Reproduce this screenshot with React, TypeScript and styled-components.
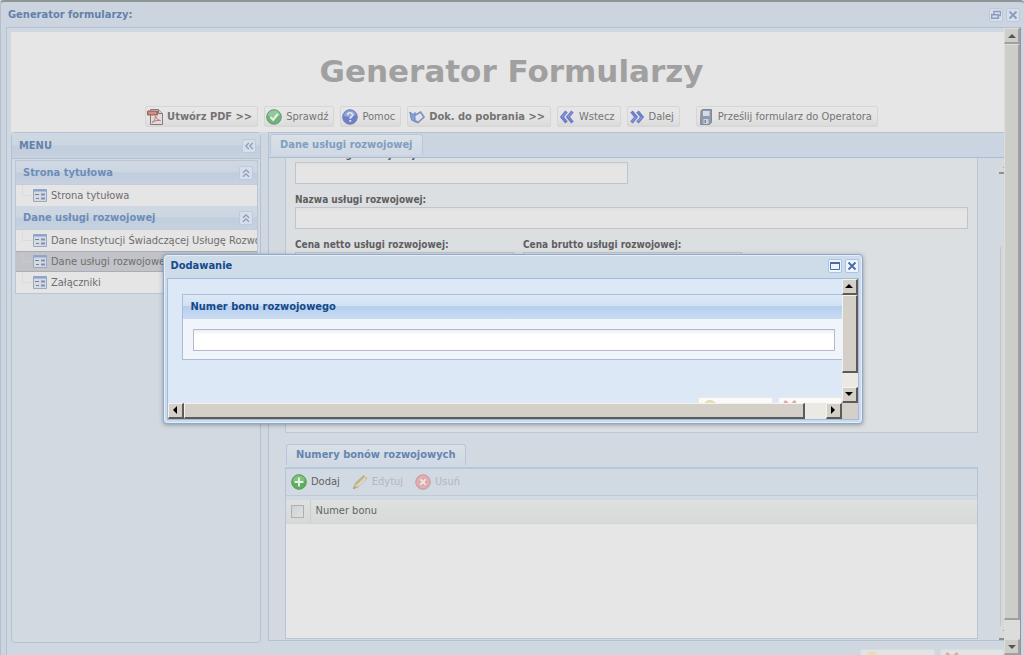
import React from 'react';
import styled, { createGlobalStyle, css } from 'styled-components';

const GlobalStyle = createGlobalStyle`
  * { box-sizing: border-box; }
  body {
    margin: 0;
    overflow: hidden;
    background: #cbd4df;
    color: #6b6b6b;
    font: 11px/14px "DejaVu Sans Condensed", "DejaVu Sans", Tahoma, sans-serif;
  }
  button, input { font: inherit; color: inherit; margin: 0; }
  button { cursor: pointer; }
`;

/* ---------- main window ---------- */

const Window = styled.main`
  display: flex;
  flex-direction: column;
  height: 100vh;
  overflow: hidden;
  border-top: 2px solid #8f9794;
  border-left: 1px solid #b4bfcd;
  border-radius: 4px 4px 0 0;
  background: #cbd4df;
`;

const TitleBar = styled.header<{ $active?: boolean }>`
  display: flex;
  align-items: center;
  gap: 3px;
  flex: none;
  height: ${p => (p.$active ? 23 : 25)}px;
  padding: ${p => (p.$active ? '0 0 0 4px' : '0 4px 0 7px')};
  color: ${p => (p.$active ? '#15498b' : '#6481aa')};
`;

const Title = styled.h2`
  flex: 1;
  margin: 0;
  font-size: 11px;
  line-height: 14px;
`;

const ToolButton = styled.button<{ $faded?: boolean }>`
  display: flex;
  align-items: center;
  justify-content: center;
  flex: none;
  width: 14px;
  height: 14px;
  padding: 0;
  border: 1px solid ${p => (p.$faded ? '#bdcadd' : '#a9c3ea')};
  border-radius: 2px;
  background: ${p => (p.$faded ? '#d6deea' : '#eef5ff')};
  color: ${p => (p.$faded ? '#8a9cba' : '#4a6ba3')};
`;

const WindowBody = styled.div`
  display: flex;
  flex: 1;
  min-height: 0;
  margin: 0 3px 0 5px;
  border: 1px solid #b3c1d4;
  border-bottom: 0;
  border-right-color: #8d95a5;
`;

const Page = styled.div`
  display: flex;
  flex-direction: column;
  flex: 1;
  min-width: 0;
  padding: 4px 0 0 4px;
  background: #cfd7e1;
`;

const Banner = styled.div`
  display: flex;
  flex-direction: column;
  align-items: center;
  justify-content: space-between;
  flex: none;
  height: 100px;
  padding: 20px 0 5px 8px;
  background: #e6e6e6;
`;

const Heading = styled.h1`
  margin: 0;
  color: #a0a0a0;
  font: bold 31px/38px "DejaVu Sans", Verdana, sans-serif;
`;

const Toolbar = styled.nav`
  display: flex;
  gap: 6px;
`;

const ActionButton = styled.button<{ $bold?: boolean; $apart?: boolean }>`
  display: flex;
  align-items: center;
  gap: 4px;
  height: 21px;
  margin-left: ${p => (p.$apart ? 10 : 0)}px;
  padding: 0 5px 0 1px;
  border: 1px solid #d6d6d6;
  border-radius: 2px;
  background: linear-gradient(#e7e7e7, #e4e4e4 60%, #dadada);
  color: #747474;
  font-weight: ${p => (p.$bold ? 'bold' : 'normal')};
  white-space: nowrap;
`;

const Columns = styled.div`
  display: flex;
  flex: 1;
  gap: 7px;
  min-height: 0;
`;

/* ---------- menu ---------- */

const MenuPanel = styled.aside`
  display: flex;
  flex-direction: column;
  flex: none;
  width: 250px;
  padding-bottom: 3px;
  border: 1px solid #b5c1d2;
  border-radius: 4px;
  background: #d2d9e1;
`;

const barFill = css`
  background: linear-gradient(#cfd8e2, #ccd6e2 48%, #c0cddd 52%, #c7d2e0);
`;

const MenuHeader = styled.div`
  ${barFill}
  display: flex;
  align-items: center;
  justify-content: space-between;
  height: 26px;
  padding: 0 4px 0 7px;
  border-bottom: 1px solid #b5c1d2;
  color: #6481aa;
  font-weight: bold;
`;

const MenuGroups = styled.div`
  margin: 1px 2px 0 3px;
  border: 1px solid #bac6d5;
`;

const GroupHeader = styled.div`
  ${barFill}
  display: flex;
  align-items: center;
  justify-content: space-between;
  height: 24px;
  padding: 0 4px 0 7px;
  border-bottom: 1px solid #c3cddb;
  color: #6d8db8;
  font-weight: bold;
`;

const GroupItems = styled.ul`
  margin: 0;
  padding: 0;
  list-style: none;
  background: #e5e5e5;
`;

const GroupItem = styled.li<{ $selected?: boolean }>`
  display: flex;
  align-items: center;
  height: 21px;
  padding-left: 6px;
  overflow: hidden;
  border: 0 solid #a9adb5;
  border-width: ${p => (p.$selected ? '1px 0' : '0')};
  background: ${p => (p.$selected ? '#c1c3c8' : 'transparent')};
`;

const Branch = styled.i`
  flex: none;
  width: 9px;
  height: 11px;
  margin: 0 2px 11px 0;
  border: 1px dotted #d2d2d2;
  border-width: 0 0 1px 1px;
`;

const ItemLink = styled.a`
  display: flex;
  align-items: center;
  gap: 4px;
  color: #6e6e6e;
  text-decoration: none;
  white-space: nowrap;
`;

/* ---------- content ---------- */

const ContentPanel = styled.section`
  display: flex;
  flex-direction: column;
  flex: 1;
  min-width: 0;
  margin-bottom: 2px;
  border: 1px solid #b5c1d2;
  border-right: 0;
  background: #d2d9e1;
`;

const TabBar = styled.div<{ $inner?: boolean }>`
  display: flex;
  align-items: flex-end;
  flex: none;
  height: ${p => (p.$inner ? 36 : 25)}px;
  padding: 0 1px 2px;
  border-bottom: ${p => (p.$inner ? '2px solid #b2c9df' : '1px solid #adbcd3')};
  background: ${p => (p.$inner ? 'transparent' : 'linear-gradient(#ccd5e0, #cad4e3)')};
`;

const Tab = styled.button<{ $soft?: boolean }>`
  height: 21px;
  padding: 0 9px;
  border: 1px solid #b7c6da;
  border-bottom: 0;
  border-radius: 3px 3px 0 0;
  background: linear-gradient(#d9e0e7, #d0d9e4);
  color: ${p => (p.$soft ? '#809fc0' : '#6685b0')};
  font-weight: bold;
  white-space: nowrap;
`;

const ContentRow = styled.div`
  display: flex;
  flex: 1;
  min-height: 0;
`;

const ContentMain = styled.div`
  display: flex;
  flex-direction: column;
  flex: 1;
  min-width: 0;
  margin: 0 21px 1px 16px;
`;

const FormView = styled.div`
  flex: none;
  height: 275px;
  overflow: hidden;
  border: 1px solid #bcc7d5;
  border-top: 0;
  background: #dcdfe1;
`;

const Form = styled.form`
  display: flex;
  flex-direction: column;
  gap: 7px;
  margin-top: -12px;
  padding: 0 9px;
`;

const FieldRow = styled.div`
  display: flex;
  gap: 9px;
`;

const Field = styled.label<{ $width?: string }>`
  display: flex;
  flex-direction: column;
  width: ${p => p.$width || '100%'};
  padding-top: 2px;
  color: #5e5e5e;
  font-size: 10px;
  font-weight: bold;
`;

const TextInput = styled.input`
  width: 100%;
  height: 22px;
  padding: 0 4px;
  border: 1px solid #bfc5ca;
  border-radius: 0;
  outline: 0;
  background: linear-gradient(#dfe0e0, #e5e5e5 4px);
`;

const GridPanel = styled.section`
  display: flex;
  flex-direction: column;
  flex: 1;
  min-height: 0;
`;

const GridFrame = styled.div`
  flex: 1;
  border: 1px solid #b7c4d5;
  border-top: 0;
  background: #e6e6e6;
`;

const GridToolbar = styled.div`
  display: flex;
  align-items: center;
  gap: 12px;
  height: 27px;
  padding: 0 5px;
  border-bottom: 1px solid #c0cad6;
  background: #d1d9e2;
`;

const GridAction = styled.button`
  display: flex;
  align-items: center;
  gap: 4px;
  padding: 0;
  border: 0;
  background: none;
  color: #5f6266;
  &:disabled { color: #b3b8be; cursor: default; }
`;

const Grid = styled.table`
  width: 100%;
  border-collapse: collapse;
  border-top: 4px solid #d1d9e2;
  th {
    height: 25px;
    padding: 0 5px;
    border-bottom: 1px solid #d3d4d4;
    background: linear-gradient(#dfe0e0, #d7d8d8);
    color: #656565;
    font-weight: normal;
    text-align: left;
  }
  th:first-child {
    width: 24px;
    border-right: 1px solid #cbcdcf;
  }
`;

const CheckBox = styled.input`
  display: block;
  appearance: none;
  width: 13px;
  height: 13px;
  border: 1px solid #adafb1;
  background: linear-gradient(135deg, #cfd1d3, #e0e0e0);
`;

const Footer = styled.footer`
  display: flex;
  justify-content: flex-end;
  flex: none;
  gap: 5px;
  height: 12px;
  padding-top: 6px;
  overflow: hidden;
`;

const FooterButton = styled.button<{ $width: number; $bright?: boolean }>`
  display: flex;
  flex: none;
  width: ${p => p.$width}px;
  height: 22px;
  padding: 1px 3px;
  border: 1px solid ${p => (p.$bright ? '#eceae6' : '#dadbdd')};
  border-radius: 2px;
  background: ${p => (p.$bright ? '#fbfaf9' : '#e2e3e4')};
`;

/* ---------- scroll bars ---------- */

const Scroll = styled.div<{ $row?: boolean; $dim?: boolean }>`
  --face: ${p => (p.$dim ? '#cdcdc9' : '#d4d0c8')};
  --light: ${p => (p.$dim ? '#dededb' : '#f4f2ee')};
  --dark: ${p => (p.$dim ? '#a0a19f' : '#5c5b59')};
  --track: ${p => (p.$dim ? '#dcddda' : '#ebe9e4')};
  --glyph: ${p => (p.$dim ? '#555' : '#000')};
  display: flex;
  flex: ${p => (p.$row ? '1' : 'none')};
  flex-direction: ${p => (p.$row ? 'row' : 'column')};
  width: ${p => (p.$row ? 'auto' : '16px')};
  height: ${p => (p.$row ? '16px' : 'auto')};
  min-width: 0;
  background: var(--track);
`;

const scrollPiece = css`
  border: 1px solid;
  border-color: var(--light) var(--dark) var(--dark) var(--light);
  border-right-width: 2px;
  border-bottom-width: 2px;
  background: var(--face);
`;

const ScrollEnd = styled.button`
  ${scrollPiece}
  display: flex;
  align-items: center;
  justify-content: center;
  flex: none;
  width: 16px;
  height: 16px;
  padding: 0;
  color: var(--glyph);
`;

const Thumb = styled.div`
  ${scrollPiece}
  flex: 1;
`;

const TrackRest = styled.div<{ $size: number }>`
  flex: 0 0 ${p => p.$size}px;
`;

const Sliver = styled.div`
  display: flex;
  flex: none;
  width: 5px;
  padding: 2px 0 0;
  overflow: hidden;
`;

const SliverScroll = styled.div`
  display: flex;
  flex-direction: column;
  justify-content: space-between;
  flex: none;
  width: 16px;
  color: #6d6d6d;
`;

const SliverThumb = styled.div`
  flex: 1;
  margin: 73px 0 0 1px;
  border-left: 1px solid #c2c6c8;
  background: #d5d8d8;
`;

const SliverEnd = styled.div`
  display: flex;
  align-items: center;
  justify-content: center;
  height: 14px;
  border-bottom: 2px solid #8e9090;
  background: #d8dada;
`;

/* ---------- dialog ---------- */

const DialogLayer = styled.div`
  position: absolute;
  inset: 0;
  display: grid;
  place-items: center;
  padding: 22px 0 0 1px;
`;

const Dialog = styled.section`
  display: flex;
  flex-direction: column;
  width: 700px;
  max-width: 100%;
  padding: 0 3px 3px;
  border: 1px solid #90a9cb;
  border-radius: 4px;
  background: #cedce9;
  box-shadow: inset 0 0 0 1px #e3eefa, 0 1px 4px rgba(70, 80, 95, 0.5);
  color: #333;
`;

const DialogBody = styled.div`
  display: flex;
  flex-direction: column;
  height: 142px;
  border: 1px solid #a3bae0;
  background: #dde8f7;
`;

const DialogRow = styled.div`
  display: flex;
  flex: 1;
  min-height: 0;
  &:last-child { flex: none; }
`;

const DialogContent = styled.div`
  display: flex;
  flex-direction: column;
  flex: 1;
  gap: 37px;
  min-width: 0;
  padding: 15px 0 0 14px;
  overflow: hidden;
`;

const DialogFieldset = styled.div`
  flex: none;
  border: 1px solid #a9bddb;
  border-right: 0;
  background: #f0f4fb;
`;

const DialogLegend = styled.label`
  display: block;
  height: 24px;
  padding: 5px 8px;
  background: linear-gradient(#dde9f8, #d0e0f4 46%, #b5cfee 48%, #cbdcf2);
  color: #15498b;
  font-weight: bold;
`;

const DialogField = styled.div`
  padding: 10px 7px 8px 10px;
  input {
    border-color: #b4b8c8;
    background: linear-gradient(#eeeeee, #fff 5px);
  }
`;

const DialogButtons = styled.div`
  display: flex;
  flex: none;
  justify-content: flex-end;
  gap: 5px;
`;

const Corner = styled.div`
  flex: none;
  width: 16px;
  background: #d4d0c8;
`;

/* ---------- icons ---------- */

const Svg = ({ children }: { children: React.ReactNode }) => (
  <svg width="16" height="16" viewBox="0 0 16 16" fill="none" aria-hidden="true">
    {children}
  </svg>
);

const PdfIcon = () => (
  <Svg>
    <path d="M3.500.5h8l4 4v11h-12z" fill="#dedcdc" stroke="#84797b" />
    <path d="M11.500.5v4h4" fill="#cfcccc" stroke="#84797b" />
    <path d="M.5 2h10v4H.5z" fill="#bd7368" stroke="#a2655c" />
    <path d="M2 4h7" stroke="#dbb5ae" />
    <path d="M5 13.500c2-1 3.500-4 3.500-6.500 1 3 3 4.500 5 4.500-3-.5-6 .3-8.500 2z" stroke="#c07a72" />
  </Svg>
);

const CheckIcon = () => (
  <Svg>
    <circle cx="8" cy="8" r="7.300" fill="#6fb377" stroke="#679a72" />
    <path d="M2 7a6 5 0 0 1 12-1c-3 2-8 3-12 1z" fill="#93c998" />
    <path d="M4.500 8l2.700 2.800L11.800 5" stroke="#e7efe7" strokeWidth="2.200" />
  </Svg>
);

const HelpIcon = () => (
  <Svg>
    <circle cx="8" cy="8" r="7.300" fill="#6c80c6" stroke="#7482b4" />
    <path d="M2 7a6 5 0 0 1 12-1c-3 2-8 3-12 1z" fill="#93a3da" />
    <path d="M5.600 6.200C5.600 3 10.600 3 10.600 6c0 1.800-2.400 1.800-2.400 3.700" stroke="#e2e6f2" strokeWidth="1.700" />
    <path d="M7.300 11h1.900v1.800H7.300z" fill="#e2e6f2" />
  </Svg>
);

const DocsIcon = () => (
  <Svg>
    <path d="M.8 3l3.400 2.500L6 3.500l1.500 10L2.500 11z" fill="#86a3d6" stroke="#6d86c0" />
    <path d="M5.500 6.500l6-3.500 3.500 5-6 5.500-3-2z" fill="#dfe3ec" stroke="#8092c0" strokeWidth="1.600" />
  </Svg>
);

const ChevronsIcon = ({ right }: { right?: boolean }) => (
  <Svg>
    <g transform={right ? 'rotate(180 8 8)' : undefined}>
      <path d="M7.500 2.500L3 8l4.500 5.500M13.500 2.500L9 8l4.500 5.500" stroke="#6f80c6" strokeWidth="3.400" />
      <path d="M7 3.500L3 8M13 3.500L9 8" stroke="#98a5dc" />
    </g>
  </Svg>
);

const SaveIcon = () => (
  <Svg>
    <path d="M3 1.500l2-1h8.500v13l-2 2H2.500z" fill="#8f9aac" stroke="#7d889b" />
    <path d="M5 2h6.500v5H5z" fill="#d5dbe4" />
    <path d="M5.500 10h5v5h-5z" fill="#cbd2dc" />
    <path d="M6.500 11h1.500v3H6.500z" fill="#7d889b" />
  </Svg>
);

const FormIcon = () => (
  <svg width="14" height="13" viewBox="0 0 14 13" fill="none" aria-hidden="true">
    <path d="M.5.5h13v12H.5z" fill="#d6dae2" stroke="#9aa7bc" />
    <path d="M.5 1.500h13" stroke="#8ba4cf" strokeWidth="2" />
    <path d="M2 5.500h4M3 9.500h3" stroke="#7b808a" />
    <path d="M8 5.500h4M8 9.500h4" stroke="#7890bb" strokeWidth="2" />
  </svg>
);

const AddIcon = () => (
  <Svg>
    <circle cx="8" cy="8" r="7.300" fill="#5fae5d" stroke="#579b5a" />
    <path d="M2 7a6 5 0 0 1 12-1c-3 2-8 3-12 1z" fill="#82c27e" />
    <path d="M8 3.500v9M3.500 8h9" stroke="#e6efe5" strokeWidth="2" />
  </Svg>
);

const EditIcon = () => (
  <Svg>
    <path d="M1.500 14.500l1.500-5 8.500-8 3.500 3-9 8.500z" fill="#d3cca7" stroke="#b9b28d" />
    <path d="M4 10l8-7.500M1.500 14.500l2-.8-1-1z" stroke="#a9a283" />
    <path d="M6 12l7.500-7.500" stroke="#e2deca" strokeWidth="1.500" />
  </Svg>
);

const DeleteIcon = () => (
  <Svg>
    <circle cx="8" cy="8" r="7.300" fill="#dba6a9" stroke="#d09ba0" />
    <circle cx="8" cy="8" r="5.300" stroke="#e3bcbe" />
    <path d="M5.300 5.300l5.400 5.400M10.700 5.300l-5.400 5.400" stroke="#efe2e3" strokeWidth="2.200" />
  </Svg>
);

const CloseGlyph = () => (
  <svg width="10" height="10" viewBox="0 0 10 10" aria-hidden="true">
    <path d="M1.500 1.500l7 7M8.500 1.500l-7 7" stroke="currentColor" strokeWidth="1.800" />
  </svg>
);

const RestoreGlyph = () => (
  <svg width="10" height="10" viewBox="0 0 10 10" fill="none" aria-hidden="true">
    <path d="M3 4V1.500h6.500v4H8" stroke="currentColor" strokeWidth="1.400" />
    <path d="M.7 4.700h6.600v3.600H.7z" stroke="currentColor" strokeWidth="1.400" />
  </svg>
);

const MaximizeGlyph = () => (
  <svg width="10" height="8" viewBox="0 0 10 8" fill="none" aria-hidden="true">
    <path d="M.5 1v6.500h9V1z" stroke="currentColor" />
    <path d="M0 1h10" stroke="currentColor" strokeWidth="2" />
  </svg>
);

const DoubleGlyph = ({ up }: { up?: boolean }) => (
  <svg width="10" height="10" viewBox="0 0 10 10" fill="none" aria-hidden="true">
    <path
      d={up ? 'M2 4.800l3-3 3 3M2 8.800l3-3 3 3' : 'M4.800 2l-3 3 3 3M8.800 2l-3 3 3 3'}
      stroke="currentColor"
      strokeWidth="1.300"
    />
  </svg>
);

const arrows = {
  up: 'M4 0l4 4H0z',
  down: 'M0 0h8L4 4z',
  left: 'M4 0v8L0 4z',
  right: 'M0 0l4 4-4 4z',
};

const Arrow = ({ to }: { to: keyof typeof arrows }) => {
  const upright = to === 'left' || to === 'right';
  return (
    <svg width={upright ? 4 : 8} height={upright ? 8 : 4} aria-hidden="true">
      <path d={arrows[to]} fill="currentColor" />
    </svg>
  );
};

const ApplyIcon = () => (
  <Svg>
    <circle cx="8" cy="8" r="6.500" fill="#ebe0b4" stroke="#e2d8ae" />
  </Svg>
);

const CancelIcon = () => (
  <Svg>
    <path d="M2.500 2l11 11M13.500 2l-11 11" stroke="#dfa7a7" strokeWidth="3" />
  </Svg>
);

/* ---------- composition ---------- */

const ScrollBar = ({ row, dim, rest }: { row?: boolean; dim?: boolean; rest: number }) => (
  <Scroll $row={row} $dim={dim}>
    <ScrollEnd aria-label={row ? 'W lewo' : 'W górę'}><Arrow to={row ? 'left' : 'up'} /></ScrollEnd>
    <Thumb />
    <TrackRest $size={rest} />
    <ScrollEnd aria-label={row ? 'W prawo' : 'W dół'}><Arrow to={row ? 'right' : 'down'} /></ScrollEnd>
  </Scroll>
);

const menu = [
  { title: 'Strona tytułowa', items: ['Strona tytułowa'] },
  {
    title: 'Dane usługi rozwojowej',
    items: ['Dane Instytucji Świadczącej Usługę Rozwojową', 'Dane usługi rozwojowej', 'Załączniki'],
    selected: 1,
  },
];

const Menu = () => (
  <MenuPanel>
    <MenuHeader>
      MENU
      <ToolButton $faded aria-label="Zwiń menu"><DoubleGlyph /></ToolButton>
    </MenuHeader>
    <MenuGroups>
      {menu.map(group => (
        <div key={group.title}>
          <GroupHeader>
            {group.title}
            <ToolButton $faded aria-label="Zwiń grupę"><DoubleGlyph up /></ToolButton>
          </GroupHeader>
          <GroupItems>
            {group.items.map((item, i) => (
              <GroupItem key={item} $selected={group.selected === i}>
                <Branch />
                <ItemLink href="#"><FormIcon />{item}</ItemLink>
              </GroupItem>
            ))}
          </GroupItems>
        </div>
      ))}
    </MenuGroups>
  </MenuPanel>
);

const ServiceForm = () => (
  <FormView>
    <Form>
      <Field $width="333px">Nr ID usługi rozwojowej:<TextInput /></Field>
      <Field>Nazwa usługi rozwojowej:<TextInput /></Field>
      <FieldRow>
        <Field $width="219px">Cena netto usługi rozwojowej:<TextInput /></Field>
        <Field $width="219px">Cena brutto usługi rozwojowej:<TextInput /></Field>
      </FieldRow>
    </Form>
  </FormView>
);

const Vouchers = () => (
  <GridPanel>
    <TabBar $inner><Tab>Numery bonów rozwojowych</Tab></TabBar>
    <GridFrame>
      <GridToolbar>
        <GridAction><AddIcon />Dodaj</GridAction>
        <GridAction disabled><EditIcon />Edytuj</GridAction>
        <GridAction disabled><DeleteIcon />Usuń</GridAction>
      </GridToolbar>
      <Grid>
        <thead>
          <tr>
            <th><CheckBox type="checkbox" aria-label="Zaznacz wszystkie" /></th>
            <th>Numer bonu</th>
          </tr>
        </thead>
      </Grid>
    </GridFrame>
  </GridPanel>
);

const AddDialog = () => (
  <DialogLayer>
    <Dialog role="dialog" aria-label="Dodawanie">
      <TitleBar $active>
        <Title>Dodawanie</Title>
        <ToolButton aria-label="Maksymalizuj"><MaximizeGlyph /></ToolButton>
        <ToolButton aria-label="Zamknij"><CloseGlyph /></ToolButton>
      </TitleBar>
      <DialogBody>
        <DialogRow>
          <DialogContent>
            <DialogFieldset>
              <DialogLegend htmlFor="voucher">Numer bonu rozwojowego</DialogLegend>
              <DialogField><TextInput id="voucher" /></DialogField>
            </DialogFieldset>
            <DialogButtons>
              <FooterButton $width={75} $bright aria-label="Zapisz"><ApplyIcon /></FooterButton>
              <FooterButton $width={64} $bright aria-label="Anuluj"><CancelIcon /></FooterButton>
            </DialogButtons>
          </DialogContent>
          <ScrollBar rest={14} />
        </DialogRow>
        <DialogRow>
          <ScrollBar row rest={21} />
          <Corner />
        </DialogRow>
      </DialogBody>
    </Dialog>
  </DialogLayer>
);

export default function App() {
  return (
    <>
      <GlobalStyle />
      <Window>
        <TitleBar>
          <Title>Generator formularzy:</Title>
          <ToolButton $faded aria-label="Przywróć"><RestoreGlyph /></ToolButton>
          <ToolButton $faded aria-label="Zamknij okno"><CloseGlyph /></ToolButton>
        </TitleBar>
        <WindowBody>
          <Page>
            <Banner>
              <Heading>Generator Formularzy</Heading>
              <Toolbar>
                <ActionButton $bold><PdfIcon />Utwórz PDF &gt;&gt;</ActionButton>
                <ActionButton><CheckIcon />Sprawdź</ActionButton>
                <ActionButton><HelpIcon />Pomoc</ActionButton>
                <ActionButton $bold><DocsIcon />Dok. do pobrania &gt;&gt;</ActionButton>
                <ActionButton><ChevronsIcon />Wstecz</ActionButton>
                <ActionButton><ChevronsIcon right />Dalej</ActionButton>
                <ActionButton $apart><SaveIcon />Prześlij formularz do Operatora</ActionButton>
              </Toolbar>
            </Banner>
            <Columns>
              <Menu />
              <ContentPanel>
                <TabBar><Tab $soft>Dane usługi rozwojowej</Tab></TabBar>
                <ContentRow>
                  <ContentMain>
                    <ServiceForm />
                    <Vouchers />
                  </ContentMain>
                  <Sliver>
                    <SliverScroll>
                      <SliverEnd><Arrow to="up" /></SliverEnd>
                      <SliverThumb />
                      <SliverEnd><Arrow to="down" /></SliverEnd>
                    </SliverScroll>
                  </Sliver>
                </ContentRow>
              </ContentPanel>
            </Columns>
            <Footer>
              <FooterButton $width={75} aria-label="Zapisz formularz"><ApplyIcon /></FooterButton>
              <FooterButton $width={64} aria-label="Anuluj formularz"><CancelIcon /></FooterButton>
            </Footer>
          </Page>
          <ScrollBar dim rest={19} />
        </WindowBody>
      </Window>
      <AddDialog />
    </>
  );
}
